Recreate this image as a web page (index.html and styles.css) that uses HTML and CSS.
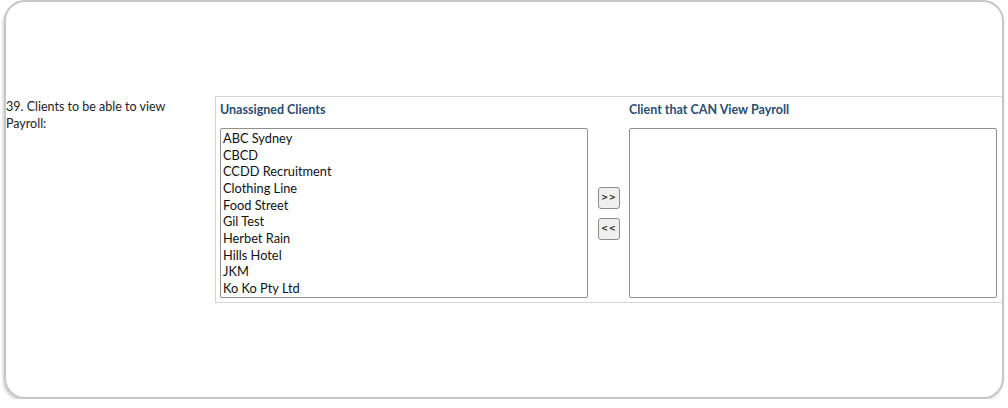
FILE: index.html
```html
<!DOCTYPE html>
<html lang="en">
<head>
<meta charset="utf-8">
<title>Payroll visibility</title>
<link rel="stylesheet" href="styles.css">
</head>
<body>
<div class="card">
  <div class="row">
    <div class="label">39. Clients to be able to view Payroll:</div>
    <div class="box">
      <div class="picker">
        <div class="head">Unassigned Clients</div>
        <div class="spacer"></div>
        <div class="head">Client that CAN View Payroll</div>
        <div class="list" role="listbox">
          <div class="opt">ABC Sydney</div>
          <div class="opt">CBCD</div>
          <div class="opt">CCDD Recruitment</div>
          <div class="opt">Clothing Line</div>
          <div class="opt">Food Street</div>
          <div class="opt">Gil Test</div>
          <div class="opt">Herbet Rain</div>
          <div class="opt">Hills Hotel</div>
          <div class="opt">JKM</div>
          <div class="opt">Ko Ko Pty Ltd</div>
        </div>
        <div class="buttons">
          <button class="mv" type="button">&gt;&gt;</button>
          <button class="mv" type="button">&lt;&lt;</button>
        </div>
        <div class="list" role="listbox"></div>
      </div>
    </div>
  </div>
</div>
</body>
</html>
```
FILE: styles.css
```css
html, body {
  margin: 0;
  padding: 0;
  background: #ffffff;
}

body {
  font-family: Lato, "Liberation Sans", sans-serif;
  color: #1a1a1a;
}

.card {
  margin-left: 4px;
  width: 1000px;
  height: 399px;
  box-sizing: border-box;
  border: 2px solid #c6c6c6;
  border-radius: 21px;
  box-shadow: -1px 2px 3px rgba(0, 0, 0, 0.2);
  background: #ffffff;
  overflow: hidden;
  padding-top: 94px;
}

.row {
  display: flex;
  align-items: flex-start;
}

.label {
  width: 209px;
  box-sizing: border-box;
  padding: 2px 40px 0 0;
  flex: none;
  font-size: 12.5px;
  line-height: 17px;
  color: #222222;
}

.box {
  flex: 1;
  border: 1px solid #d4d4d4;
  border-right: none;
  padding: 5px 0 4px 4px;
}

.picker {
  display: grid;
  grid-template-columns: 368px 41px 368px;
  grid-template-rows: 26px 170px;
}

.head {
  font-size: 12.5px;
  line-height: 16px;
  font-weight: 700;
  color: #294d74;
}

.list {
  box-sizing: border-box;
  border: 1px solid #8f8f8f;
  border-radius: 2px;
  padding: 1px 2px 0;
  background: #ffffff;
  overflow: hidden;
}

.opt {
  font-size: 12.8px;
  line-height: 16.67px;
  color: #111111;
  white-space: nowrap;
}

.buttons {
  display: flex;
  flex-direction: column;
  align-items: center;
  justify-content: center;
  gap: 9px;
}

.mv {
  width: 22px;
  height: 22px;
  box-sizing: border-box;
  padding: 0;
  border: 1px solid #8c8c8c;
  border-radius: 3px;
  background: #efefef;
  font-family: "DejaVu Sans", sans-serif;
  font-size: 8px;
  font-weight: 700;
  letter-spacing: 1px;
  color: #222222;
  text-indent: 1px;
}
```
